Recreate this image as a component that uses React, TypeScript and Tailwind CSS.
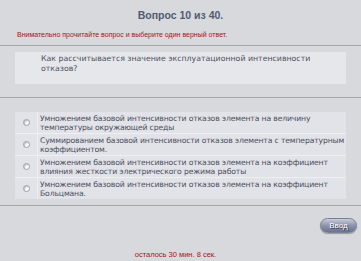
import React from "react";

const answers = [
  ["Умножением базовой интенсивности отказов элемента на величину", "температуры окружающей среды"],
  ["Суммированием базовой интенсивности отказов элемента с температурным", "коэффициентом."],
  ["Умножением базовой интенсивности отказов элемента на коэффициент", "влияния жесткости электрического режима работы"],
  ["Умножением базовой интенсивности отказов элемента на коэффициент", "Больцмана."],
];

function Radio() {
  return (
    <div className="w-[7px] h-[7px] rounded-full bg-white border border-[#9a9ca4] shadow-[inset_1px_1px_1px_rgba(0,0,0,0.25)]" />
  );
}

export default function App() {
  return (
    <div className="w-[361px] h-[261px] overflow-hidden bg-[#d8d9dd] font-['Liberation_Sans',Arial,sans-serif]">
      <div className="pt-[9px] h-[24px] text-center text-[10.5px] font-bold text-[#525a72] leading-[12px]">
        Вопрос 10 из 40.
      </div>
      <div className="pl-[17px] pt-[6px] h-[21px] text-[7px] leading-[9px] text-[#a01818]">
        Внимательно прочитайте вопрос и выберите один верный ответ.
      </div>
      <div className="border-t border-[#a4a5aa]" />
      <div className="mx-[15px] mt-[6px] h-[32px] bg-[#e6e7eb] pl-[26px] pr-[10px] pt-[2px] font-['DejaVu_Sans',Verdana,sans-serif] text-[7.8px] leading-[10px] text-[#4a4e5c]">
        Как рассчитывается значение эксплуатационной интенсивности <br />
        отказов?
      </div>
      <div className="mt-[13px] border-t border-[#a4a5aa]" />
      <div className="mx-[15px] mt-[14px] flex flex-col gap-px bg-[#eeeff2] font-['DejaVu_Sans',Verdana,sans-serif] text-[7.7px] tracking-[-0.15px] leading-[9px] text-[#4a4e5c]">
        {answers.map((a, i) => (
          <div key={i} className="flex gap-px h-[21px]">
            <div className="w-[22px] shrink-0 bg-[#e2e3e8] flex items-center justify-center">
              <Radio />
            </div>
            <div className="flex-1 min-w-0 bg-[#e2e3e8] pl-[2px] pt-[2px] whitespace-nowrap">
              <div>{a[0]}</div>
              <div>{a[1]}</div>
            </div>
          </div>
        ))}
      </div>
      <div className="mt-[6px] border-t border-[#a4a5aa]" />
      <div className="flex justify-end pr-[4px] mt-[12px]">
        <button className="w-[37px] h-[15px] rounded-full bg-gradient-to-b from-[#c8cdda] via-[#8d94ad] to-[#6c7390] border border-[#7a8099] text-[8px] leading-[13px] text-white [text-shadow:1px_1px_0_#3a3f52] shadow-[0_1px_1px_rgba(0,0,0,0.3)]">
          Ввод
        </button>
      </div>
      <div className="mt-[17px] pr-[10px] text-center text-[7.5px] leading-[9px] text-[#a01818]">
        осталось 30 мин. 8 сек.
      </div>
    </div>
  );
}
